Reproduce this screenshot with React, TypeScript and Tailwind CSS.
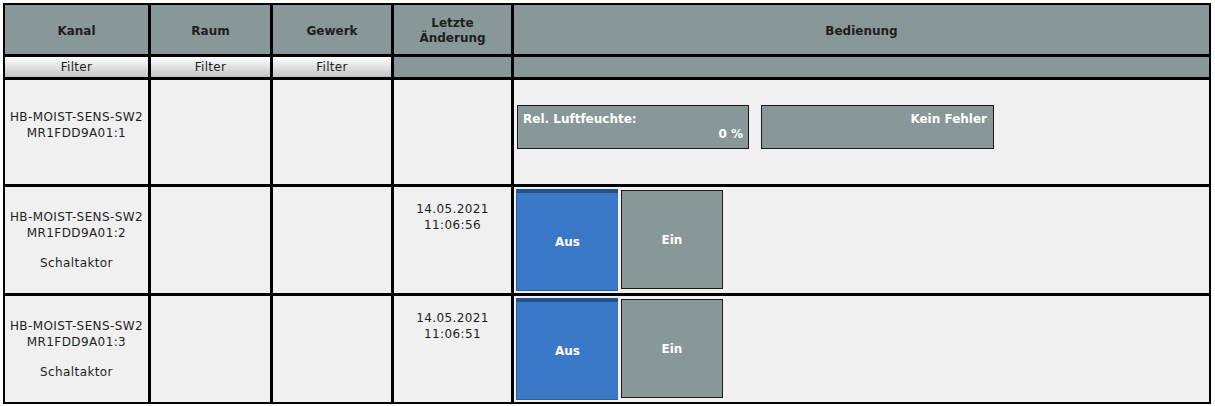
import React from "react";

const head = "bg-[#889898] flex items-center justify-center text-center font-bold text-[12px] text-[#1e1e1e] leading-[15px] pt-[3px]";
const cell = "bg-[#f0f0f0] text-[12px] text-[#1e1e1e] leading-[16px] text-center tracking-[0.4px]";
const filter = "bg-gradient-to-b from-white to-[#c4c4c4] flex items-center justify-center text-[12px] text-[#1e1e1e] tracking-[0.3px]";

type Row = { ch: string; date?: string[]; type?: string };

const rows: Row[] = [
  { ch: "MR1FDD9A01:2", date: ["14.05.2021", "11:06:56"], type: "Schaltaktor" },
  { ch: "MR1FDD9A01:3", date: ["14.05.2021", "11:06:51"], type: "Schaltaktor" },
];

const Switch: React.FC = () => (
  <div className="flex gap-[3px] pl-[2px] pt-[2px]">
    <div className="w-[102px] h-[102px] bg-[#3a78c8] border-t-[4px] border-t-[#23508a] border-l border-l-[#2d5f9e] border-b border-b-[#2d5f9e] flex items-center justify-center text-white font-bold text-[12px]">
      Aus
    </div>
    <div className="w-[102px] h-[99px] mt-[1px] bg-[#889898] border border-[#1a1a1a] flex items-center justify-center text-white font-bold text-[12px]">
      Ein
    </div>
  </div>
);

const App: React.FC = () => {
  return (
    <div className="w-[1215px] h-[406px] bg-white pt-[3px] pl-[3px]" style={{ fontFamily: '"DejaVu Sans", Verdana, sans-serif' }}>
      <div className="w-[1208px] grid grid-cols-[143px_119px_118px_117px_695px] grid-rows-[49px_20px_104px_106px_106px] gap-[3px] p-[2px] bg-black">
        <div className={head}>Kanal</div>
        <div className={head}>Raum</div>
        <div className={head}>Gewerk</div>
        <div className={head}>Letzte<br />Änderung</div>
        <div className={head}>Bedienung</div>

        <div className={filter}>Filter</div>
        <div className={filter}>Filter</div>
        <div className={filter}>Filter</div>
        <div className="bg-[#889898]"></div>
        <div className="bg-[#889898]"></div>

        <div className={`${cell} flex flex-col items-center justify-center pb-[14px]`}>
          <div>HB-MOIST-SENS-SW2</div>
          <div>MR1FDD9A01:1</div>
        </div>
        <div className={cell}></div>
        <div className={cell}></div>
        <div className={cell}></div>
        <div className="bg-[#f0f0f0] flex gap-[12px] pl-[3px] pt-[25px]">
          <div className="w-[232px] h-[44px] bg-[#889898] border border-[#1a1a1a] text-white font-bold text-[12px] leading-[15px] px-[5px] pt-[6px]">
            <div>Rel. Luftfeuchte:</div>
            <div className="text-right">0 %</div>
          </div>
          <div className="w-[233px] h-[44px] bg-[#889898] border border-[#1a1a1a] text-white font-bold text-[12px] leading-[15px] px-[6px] pt-[6px] text-right">
            Kein Fehler
          </div>
        </div>

        {rows.map((r) => (
          <React.Fragment key={r.ch}>
            <div className={`${cell} flex flex-col items-center justify-center`}>
              <div>HB-MOIST-SENS-SW2</div>
              <div>{r.ch}</div>
              <div className="mt-[14px]">{r.type}</div>
            </div>
            <div className={cell}></div>
            <div className={cell}></div>
            <div className={`${cell} pt-[14px] leading-[15px]`}>
              <div>{r.date?.[0]}</div>
              <div>{r.date?.[1]}</div>
            </div>
            <div className="bg-[#f0f0f0]">
              <Switch />
            </div>
          </React.Fragment>
        ))}
      </div>
    </div>
  );
};

export default App;
